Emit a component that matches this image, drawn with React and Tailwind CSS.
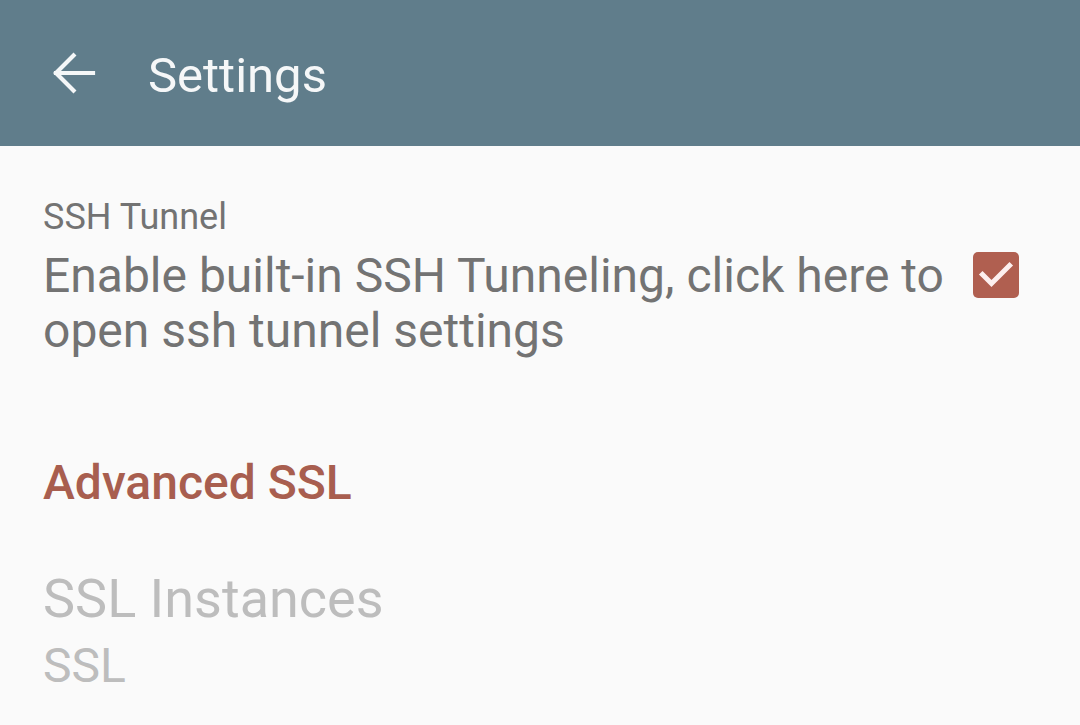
export default function App() {
  return (
    <div className="w-[1080px] h-[725px] bg-[#fafafa] overflow-hidden" style={{ fontFamily: "Roboto, 'Noto Sans', sans-serif" }}>
      <div className="h-[146px] bg-[#607d8b] flex items-start">
        <div className="w-[148px] pl-[51px] pt-[50px]">
          <svg width="46" height="46" viewBox="0 0 46 46" fill="none" stroke="#f5f7f8" strokeWidth="4.2" strokeLinecap="square">
            <path d="M5 23H42M22.5 5.5L5 23l17.5 17.5" />
          </svg>
        </div>
        <div className="pt-[51px] text-[49px] text-[#f5f7f8] leading-none">Settings</div>
      </div>
      <div className="pl-[43px] pr-[61px] pt-[53px] flex items-start">
        <div className="flex-1">
          <div className="text-[36px] text-[#737373] leading-[36px]">SSH Tunnel</div>
          <div className="text-[48px] text-[#737373] leading-[55px] mt-[13px]">
            Enable built-in SSH Tunneling, click here to open ssh tunnel settings
          </div>
        </div>
        <div className="mt-[53px] ml-[20px] w-[46px] h-[46px] rounded-[5px] bg-[#b05f50]">
          <svg width="46" height="46" viewBox="0 0 46 46" fill="none" stroke="#fdefee" strokeWidth="5" strokeLinecap="square">
            <path d="M9.5 22.5L18.5 31.5L36.5 13.5" />
          </svg>
        </div>
      </div>
      <div className="pl-[43px] mt-[101px] text-[48px] font-medium text-[#a85e4f] leading-[48px]">Advanced SSL</div>
      <div className="pl-[43px] mt-[65px]">
        <div className="text-[54px] text-[#bdbdbd] leading-[54px]">SSL Instances</div>
        <div className="text-[48px] text-[#bdbdbd] leading-[48px] mt-[16px]">SSL</div>
      </div>
    </div>
  );
}
